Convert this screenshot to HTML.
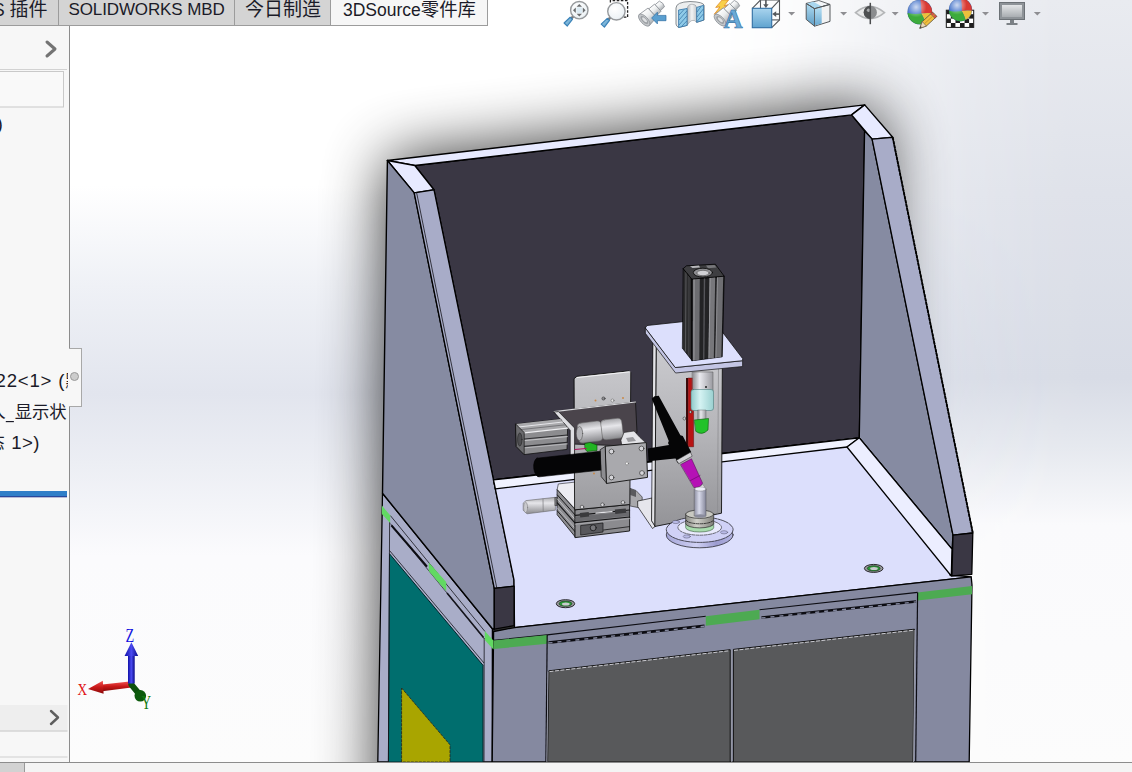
<!DOCTYPE html>
<html><head><meta charset="utf-8">
<style>
html,body{margin:0;padding:0;}
body{width:1132px;height:772px;overflow:hidden;position:relative;background:#fff;font-family:"Liberation Sans","Noto Sans CJK SC",sans-serif;color:#1b1b28;}
#vp{position:absolute;left:0;top:0;width:1132px;height:772px;}
.tab{position:absolute;top:-1px;height:25px;background:#d4d4d4;border:1px solid #9c9c9c;box-sizing:content-box;font-size:19px;line-height:21px;white-space:nowrap;overflow:hidden;}
.tab > span{position:absolute;top:-1.3px;}
#left{position:absolute;left:0;top:26px;width:69px;height:736px;background:#f7f7f7;border-right:1px solid #8c8c8c;overflow:hidden;}
#left .t{position:absolute;font-size:19px;white-space:nowrap;line-height:24px;}
#handle{position:absolute;left:69px;top:348px;width:12px;height:57px;background:#f7f7f7;border:1px solid #a8a8a8;border-left:none;}
#bottom{position:absolute;left:0;top:762px;width:1132px;height:10px;background:#f4f4f4;border-top:1px solid #8c8c8c;}
</style></head><body>
<svg id="vp" width="1132" height="772" viewBox="0 0 1132 772">
<defs>
<linearGradient id="bg" x1="0" y1="0" x2="0" y2="772" gradientUnits="userSpaceOnUse">
<stop offset="0" stop-color="#ffffff"/><stop offset="0.24" stop-color="#ffffff"/><stop offset="0.37" stop-color="#eff1f6"/><stop offset="0.51" stop-color="#e2e5ee"/><stop offset="0.6" stop-color="#ecEEf4"/><stop offset="0.72" stop-color="#fbfbfd"/><stop offset="1" stop-color="#fcfcfc"/>
</linearGradient>
<linearGradient id="bg2" x1="0" y1="0" x2="0" y2="772" gradientUnits="userSpaceOnUse">
<stop offset="0" stop-color="#e9ebf0"/><stop offset="0.25" stop-color="#dfe2ea"/><stop offset="0.49" stop-color="#d8dce6"/><stop offset="0.58" stop-color="#e6e9ef"/><stop offset="0.68" stop-color="#fafafc"/><stop offset="1" stop-color="#fcfcfc"/>
</linearGradient>
<linearGradient id="bgm" x1="720" y1="0" x2="1132" y2="0" gradientUnits="userSpaceOnUse"><stop offset="0" stop-color="#000"/><stop offset="0.15" stop-color="#202020"/><stop offset="0.4" stop-color="#909090"/><stop offset="0.6" stop-color="#d8d8d8"/><stop offset="0.8" stop-color="#fafafa"/><stop offset="1" stop-color="#fff"/></linearGradient>
<mask id="bgmask" maskUnits="userSpaceOnUse" x="0" y="0" width="1132" height="772"><rect x="0" y="0" width="1132" height="772" fill="url(#bgm)"/></mask>
<filter id="blur" x="-30%" y="-30%" width="160%" height="160%"><feGaussianBlur stdDeviation="31"/></filter>
</defs>
<rect x="0" y="0" width="1132" height="772" fill="url(#bg)"/>
<rect x="0" y="0" width="1132" height="772" fill="url(#bg2)" mask="url(#bgmask)"/>
<!--SHADOW-->
<g filter="url(#blur)" opacity="0.8">
<polygon points="387,160 865,105 886,132 886,900 377,900 382,495" fill="#000"/>
</g>

<!--/SHADOW-->
<!--MODEL-->
<g id="model" stroke-linejoin="round">
<!-- dark back wall -->
<polygon points="414.8,165.5 851.6,114.9 864.6,131 859.3,437.8 493.5,479.9 434,189.8" fill="#3a3744" stroke="#000" stroke-width="1.3"/>
<!-- top face -->
<polygon points="387.4,160.5 864.7,104.9 851.6,114.9 414.8,165.5" fill="#e7eaff" stroke="#000" stroke-width="1.4"/>
<!-- left chamfer face -->
<polygon points="387.4,160.5 414.8,165.5 434,189.8 414.2,192.9" fill="#e7eaff" stroke="#000" stroke-width="1.4"/>
<!-- right chamfer face -->
<polygon points="864.7,104.9 892.7,137.3 872.1,139.1 851.6,114.9" fill="#e7eaff" stroke="#000" stroke-width="1.4"/>
<!-- left cabinet side (lighter) -->
<polygon points="382.5,493.3 492.4,628.8 492.2,762 377.8,762" fill="#a9adc8" stroke="#000" stroke-width="1.3"/>
<!-- left grey side panel -->
<polygon points="387.4,160.5 414.2,192.9 494.3,588.3 494.3,629.2 492.4,628.8 382.5,493.3" fill="#868ba2" stroke="#000" stroke-width="1.4"/>
<!-- left slanted light face -->
<polygon points="414.2,192.9 434,189.8 514,580 514.1,586.2 494.3,588.3" fill="#a8acc8" stroke="#000" stroke-width="1.3"/>
<line x1="416.6" y1="192.6" x2="496.8" y2="588" stroke="#15151c" stroke-width="0.8"/>
<!-- right inner grey side face -->
<polygon points="864.6,131 872.1,139.1 953,535.2 952,549.2 859.3,437.8" fill="#868ba2" stroke="#000" stroke-width="1.3"/>
<!-- right slanted light face -->
<polygon points="872.1,139.1 892.7,137.3 972.8,533 953,535.2" fill="#a8acc8" stroke="#000" stroke-width="1.3"/>
<line x1="892.7" y1="137.3" x2="972.8" y2="533" stroke="#000" stroke-width="1.8" stroke-dasharray="3.2 0.8"/>
<!-- table -->
<polygon points="493.5,479.9 859.3,437.8 951.2,548.3 950,575 971.2,576.8 514.5,627.6 514,580" fill="#dcdffc" stroke="#000" stroke-width="1.3"/>
<!-- back white strip -->
<polygon points="493.5,479.9 859.3,437.8 847,447 495.4,488.8" fill="#f0f2ff" stroke="#000" stroke-width="1.3"/>
<!-- right white strip -->
<polygon points="859.3,437.8 952,549.2 951.3,576 847,447" fill="#eceeff" stroke="#000" stroke-width="1.3"/>
<!-- end caps -->
<polygon points="953,535.2 972.8,533 971.8,574.3 951.9,576" fill="#3a3744" stroke="#000" stroke-width="1.3"/>
<polygon points="494.3,588.3 514.1,586.2 514.1,625.7 494.3,629.2" fill="#3a3744" stroke="#000" stroke-width="1.3"/>
<!-- cabinet front -->
<polygon points="493.6,631.5 514.5,627.6 971.2,576.8 972,585 969.2,762 492.2,762" fill="#8589a0" stroke="#000" stroke-width="1.3"/>
<!-- front trim lines -->
<polyline points="493.6,640.4 547.2,634.9 705.8,616.3" fill="none" stroke="#0c0c12" stroke-width="1.1"/>
<polyline points="759.5,609.8 917.6,592.4" fill="none" stroke="#0c0c12" stroke-width="1.1"/>
<!-- slot dashed lines -->
<line x1="548.5" y1="642.6" x2="704.5" y2="625.9" stroke="#0c0c12" stroke-width="2.6"/>
<line x1="548.5" y1="643" x2="704.5" y2="626.3" stroke="#8589a0" stroke-width="1.4" stroke-dasharray="4 5"/>
<line x1="761.5" y1="617.6" x2="916" y2="601.5" stroke="#0c0c12" stroke-width="2.6"/>
<line x1="761.5" y1="618" x2="916" y2="601.9" stroke="#8589a0" stroke-width="1.4" stroke-dasharray="4 5"/>
<!-- green strips front -->
<polygon points="493.6,640.4 547.2,634.9 547.2,643.8 493.6,649" fill="#4daa52"/>
<polygon points="705.8,616.3 759.5,609.8 759.5,619.3 705.8,625.7" fill="#4daa52"/>
<polygon points="917.6,592.4 972,586 972,594.3 917.6,600.6" fill="#4daa52"/>
<!-- columns edges -->
<line x1="547.2" y1="634.9" x2="545.9" y2="762" stroke="#0c0c12" stroke-width="1.2"/>
<line x1="917.6" y1="592.4" x2="915.7" y2="762" stroke="#0c0c12" stroke-width="1.2"/>
<!-- doors -->
<polygon points="548.8,670.8 730.2,649.7 730.2,762 547.6,762" fill="#58595b" stroke="#111" stroke-width="1"/>
<polygon points="733.4,649.4 914.4,629.2 913,762 733.4,762" fill="#58595b" stroke="#111" stroke-width="1"/>
<line x1="549.5" y1="671.6" x2="729" y2="650.8" stroke="#c9c9cf" stroke-width="1" stroke-dasharray="4 1.5"/>
<line x1="734" y1="650.4" x2="914" y2="630.2" stroke="#c9c9cf" stroke-width="1" stroke-dasharray="4 1.5"/>
<line x1="731.8" y1="649.6" x2="731.8" y2="762" stroke="#9a9ca6" stroke-width="1"/>
<line x1="914.9" y1="630" x2="913.6" y2="762" stroke="#a4a6b0" stroke-width="0.9"/>
<line x1="548" y1="671.5" x2="546.9" y2="762" stroke="#a4a6b0" stroke-width="0.8"/>
<!-- left side details -->
<polygon points="389.5,553.8 483,665.3 483,762 388.4,762" fill="#006e6e" stroke="#02242a" stroke-width="1"/>
<polygon points="401.6,688 450,744.8 450,762 401.6,762" fill="#a9a500" stroke="#222" stroke-width="0.8" stroke-dasharray="3 1"/>
<line x1="390.3" y1="515.5" x2="485" y2="631.5" stroke="#15151c" stroke-width="0.8"/>
<line x1="390.3" y1="523.5" x2="484.5" y2="639" stroke="#15151c" stroke-width="0.7"/>
<line x1="391.4" y1="525.4" x2="427" y2="566.6" stroke="#0c0c12" stroke-width="2.2"/>
<line x1="447" y1="593" x2="483.5" y2="637.5" stroke="#15151c" stroke-width="1.6"/>
<line x1="389.5" y1="550.5" x2="484" y2="663" stroke="#15151c" stroke-width="0.8"/>
<line x1="389.6" y1="522" x2="388.4" y2="762" stroke="#15151c" stroke-width="0.8"/>
<line x1="484.2" y1="638" x2="484" y2="762" stroke="#15151c" stroke-width="0.8"/>
<!-- green side bits -->
<polygon points="381.9,505.6 390.1,515.3 390.1,523.1 381.9,514" fill="#62d962"/>
<polygon points="428.8,562.5 446.2,582 446.2,591.3 428.8,571.1" fill="#62d962"/>
<polygon points="484.8,631 493.3,640.4 493.4,649.5 484.8,640" fill="#62d962"/>
<!-- washers -->
<g id="w1"><ellipse cx="565.5" cy="603.7" rx="9.2" ry="4" fill="#9a9a9e" stroke="#2a2a2e" stroke-width="1"/><ellipse cx="565.5" cy="603.7" rx="6.4" ry="2.6" fill="#2a9a36" stroke="#1e3a22" stroke-width="0.7"/><ellipse cx="565.8" cy="603.9" rx="3.8" ry="1.5" fill="#c9c9cd"/></g>
<g id="w2"><ellipse cx="873.7" cy="568.4" rx="9.3" ry="4" fill="#9a9a9e" stroke="#2a2a2e" stroke-width="1"/><ellipse cx="873.7" cy="568.4" rx="6.4" ry="2.6" fill="#2a9a36" stroke="#1e3a22" stroke-width="0.7"/><ellipse cx="874" cy="568.6" rx="3.8" ry="1.5" fill="#c9c9cd"/></g>
</g>

<!--/MODEL-->
<!--EQUIP-->
<defs>
<linearGradient id="cyl" x1="0" y1="0" x2="1" y2="0"><stop offset="0" stop-color="#8e8e92"/><stop offset="0.35" stop-color="#e9e9ee"/><stop offset="1" stop-color="#9a9aa0"/></linearGradient>
<linearGradient id="cylv" x1="0" y1="0" x2="0" y2="1"><stop offset="0" stop-color="#a8a8ac"/><stop offset="0.35" stop-color="#e6e6ea"/><stop offset="1" stop-color="#8a8a8e"/></linearGradient>
<linearGradient id="cyan" x1="0" y1="0" x2="1" y2="0"><stop offset="0" stop-color="#8fc9c9"/><stop offset="0.4" stop-color="#d5f3f3"/><stop offset="1" stop-color="#9ad0d0"/></linearGradient>
<linearGradient id="colg" x1="0" y1="0" x2="1" y2="0"><stop offset="0" stop-color="#b4b4b8"/><stop offset="0.5" stop-color="#c6c6ca"/><stop offset="1" stop-color="#b0b0b4"/></linearGradient>
<linearGradient id="flside" x1="0" y1="0" x2="1" y2="0"><stop offset="0" stop-color="#a5a6d8"/><stop offset="0.45" stop-color="#d0d1f4"/><stop offset="0.75" stop-color="#9c9cd0"/><stop offset="1" stop-color="#b4b5e2"/></linearGradient>
<linearGradient id="hubside" x1="0" y1="0" x2="1" y2="0"><stop offset="0" stop-color="#8a8a84"/><stop offset="0.4" stop-color="#d0d0ca"/><stop offset="1" stop-color="#80807a"/></linearGradient>
<linearGradient id="pinl" x1="0" y1="0" x2="1" y2="0"><stop offset="0" stop-color="#9092a6"/><stop offset="0.4" stop-color="#d8daea"/><stop offset="1" stop-color="#85879a"/></linearGradient>
<linearGradient id="colv" x1="0" y1="345" x2="0" y2="525" gradientUnits="userSpaceOnUse"><stop offset="0" stop-color="#cbcbcf"/><stop offset="0.5" stop-color="#b4b4b8"/><stop offset="1" stop-color="#949498"/></linearGradient>
<linearGradient id="platev" x1="0" y1="372" x2="0" y2="508" gradientUnits="userSpaceOnUse"><stop offset="0" stop-color="#c6c6ca"/><stop offset="0.5" stop-color="#b4b4b8"/><stop offset="1" stop-color="#9c9ca0"/></linearGradient>
</defs>
<g id="equip" stroke-linejoin="round" stroke-linecap="round">
<!-- ===== XY stage assembly (left) ===== -->
<!-- micrometer knob -->
<polygon points="523.5,502.8 526,500.6 555.4,497.3 555.4,510.2 527,513.8 523.5,510.5" fill="url(#cylv)" stroke="#66666a" stroke-width="0.6"/>
<line x1="543" y1="498.8" x2="543.2" y2="511.6" stroke="#7a7a7e" stroke-width="0.7"/>
<ellipse cx="525.6" cy="507.4" rx="2" ry="5.2" fill="#c9c9cd" stroke="#77777b" stroke-width="0.5"/>
<rect x="555.2" y="497.5" width="3.6" height="8" fill="#77777b" stroke="#222" stroke-width="0.5"/>
<!-- stage base stack -->
<polygon points="558.7,483.9 576,482 576,510 557.4,490" fill="#ececf2" stroke="#222" stroke-width="0.6"/>
<polygon points="557.4,489.9 575.3,509.8 575.3,537 557.4,515" fill="#8e8e92" stroke="#111" stroke-width="0.8"/>
<line x1="557.4" y1="495" x2="575.3" y2="515.2" stroke="#1a1a1c" stroke-width="1"/>
<line x1="557.4" y1="499" x2="575.3" y2="519.5" stroke="#d0d0d4" stroke-width="0.8"/>
<line x1="557.4" y1="503" x2="575.3" y2="523.4" stroke="#1a1a1c" stroke-width="1.2"/>
<line x1="557.4" y1="508" x2="575.3" y2="528.5" stroke="#c4c4c8" stroke-width="0.7"/>
<line x1="557.4" y1="511" x2="575.3" y2="532" stroke="#1a1a1c" stroke-width="1"/>
<polygon points="575.3,509.8 629.6,504.5 629.6,531 575.3,537.6" fill="#8b8b8f" stroke="#111" stroke-width="0.9"/>
<line x1="575.3" y1="515.4" x2="629.6" y2="510" stroke="#151517" stroke-width="1.1"/>
<polygon points="576,516.6 629,511.2 629,516 576,521.6" fill="#6a6a6e"/>
<line x1="575.3" y1="522.6" x2="629.6" y2="517" stroke="#151517" stroke-width="1.2"/>
<line x1="575.3" y1="524.2" x2="629.6" y2="518.6" stroke="#b5b5b9" stroke-width="0.7"/>
<line x1="596" y1="513.2" x2="612" y2="511.6" stroke="#e4e4e8" stroke-width="1.3"/>
<polygon points="581,525.5 603,523 603,532 581,535" fill="#58585c" stroke="#151517" stroke-width="0.7"/>
<circle cx="593.2" cy="527.8" r="3" fill="#77777b" stroke="#151517" stroke-width="0.8"/>
<polyline points="603.5,530 629.6,526.6" fill="none" stroke="#151517" stroke-width="0.8"/>
<rect x="580" y="512.5" width="9" height="4.5" fill="#3a3a3d" transform="rotate(-6 584 515)"/>
<rect x="615" y="509" width="11" height="4.5" fill="#3a3a3d" transform="rotate(-6 620 511)"/>
<!-- right foot bracket of stage -->
<polygon points="630.3,488.5 636,490.5 642.2,497 642.2,508.4 630.3,506" fill="#a8a8ac" stroke="#222" stroke-width="0.6"/>
<polygon points="630.3,488.5 636,490.5 636,497 630.3,495" fill="#5a5a5e"/>
<!-- vertical plate -->
<polygon points="574.3,378.5 577,376.3 629,370.8 630.8,372.6 629.8,504.5 575,509.8" fill="url(#platev)" stroke="#111" stroke-width="0.9"/>
<polyline points="577,377.6 629.8,371.8" fill="none" stroke="#f4f4f6" stroke-width="1"/>
<circle cx="595.5" cy="400.5" r="1" fill="#c98a4a"/><circle cx="603.5" cy="398.5" r="1.6" fill="#8c8c90" stroke="#222" stroke-width="0.5"/><circle cx="612.5" cy="400.5" r="1.5" fill="#e8e8e8" stroke="#444" stroke-width="0.4"/><circle cx="623" cy="398" r="1" fill="#c98a4a"/>
<circle cx="582" cy="507" r="1.8" fill="#d8d8dc" stroke="#222" stroke-width="0.5"/><circle cx="602.5" cy="504.7" r="1.8" fill="#d8d8dc" stroke="#222" stroke-width="0.5"/><circle cx="623" cy="502.4" r="1.8" fill="#d8d8dc" stroke="#222" stroke-width="0.5"/>
<!-- dark horizontal plate -->
<polygon points="554.2,411.6 635.5,402 637,432 628,446 572,444 572,431 558,415" fill="#4a444b" stroke="#111" stroke-width="0.8"/>
<polyline points="554.2,411.6 635.5,402" fill="none" stroke="#d9d9dd" stroke-width="1.1"/>
<!-- L bracket -->
<polygon points="554.2,412 558.5,411.6 574.6,428 574.6,456 570.2,456 570.2,430.5" fill="#dedee2" stroke="#111" stroke-width="0.7"/>
<!-- air cylinder left -->
<polygon points="515.8,424.1 560.5,419 567.6,428 567,449.4 524.2,454.6 516.5,446.8" fill="#8c8c8f" stroke="#111" stroke-width="0.8"/>
<polygon points="515.8,424.1 560.5,419 567.6,428 524.2,432.6" fill="#a9a9ac"/>
<line x1="518.5" y1="427" x2="563" y2="422" stroke="#e6e6ea" stroke-width="1"/>
<line x1="521" y1="429.6" x2="565.5" y2="424.8" stroke="#6a6a6d" stroke-width="0.8"/>
<line x1="524.2" y1="432.8" x2="567.6" y2="428.2" stroke="#efeff2" stroke-width="1.2"/>
<line x1="524.2" y1="439" x2="567.3" y2="435" stroke="#2e2e31" stroke-width="1.2"/>
<line x1="524.2" y1="440.6" x2="567.3" y2="436.6" stroke="#c9c9cd" stroke-width="0.9"/>
<line x1="524.2" y1="446.3" x2="567.2" y2="442.3" stroke="#2e2e31" stroke-width="1.2"/>
<line x1="524.2" y1="447.9" x2="567.2" y2="443.9" stroke="#bcbcc0" stroke-width="0.9"/>
<polygon points="515.8,424.1 524.2,432.6 524.2,454.6 516.5,446.8" fill="#6a6a6d" stroke="#111" stroke-width="0.7"/>
<ellipse cx="519.8" cy="439.5" rx="2.2" ry="6.5" fill="#4e4e51" stroke="#222" stroke-width="0.6"/>
<!-- rollers -->
<rect x="578" y="422" width="24" height="20" rx="4" fill="url(#cylv)" stroke="#666" stroke-width="0.5" transform="rotate(-7 590 432)"/>
<rect x="601.5" y="419" width="21" height="20" rx="4" fill="url(#cylv)" stroke="#666" stroke-width="0.5" transform="rotate(-7 612 429)"/>
<ellipse cx="579.5" cy="433.5" rx="3.2" ry="7" fill="#b4b4b8" stroke="#444" stroke-width="0.5"/>
<!-- white bracket behind block -->
<polygon points="621,440 624,432.5 634,431 640,437.5 646,443 622,445" fill="#e4e4e8" stroke="#222" stroke-width="0.6"/><polygon points="626,438 633,437 636,441 628,442" fill="#9a9a9e"/>
<!-- small green -->
<polygon points="585,443.5 590,442.5 597,445 597,450.5 587,451.5 585,449" fill="#22b422" stroke="#0a4a0a" stroke-width="0.6"/>
<line x1="575" y1="449.5" x2="586" y2="448.5" stroke="#b01060" stroke-width="1.2"/>
<!-- black rod -->
<path d="M537,458.2 L606.5,450.5 L606.5,469.5 L539.5,476.8 A4.5,9.3 -5 0 1 537,458.2 Z" fill="#050506" stroke="#000" stroke-width="0.6"/>
<!-- square block -->
<polygon points="600.5,449.5 605.6,446.2 606.8,483.4 601.5,477" fill="#8d8d91" stroke="#111" stroke-width="0.7"/>
<polygon points="605.6,446.2 646.3,442.6 647.5,477.4 606.8,483.4" fill="#a9a9ad" stroke="#111" stroke-width="0.9"/>
<circle cx="611.5" cy="451.5" r="2.4" fill="#d5d5d9" stroke="#222" stroke-width="0.6"/><circle cx="641.5" cy="448.5" r="2.4" fill="#d5d5d9" stroke="#222" stroke-width="0.6"/>
<circle cx="611.5" cy="477.5" r="2.4" fill="#d5d5d9" stroke="#222" stroke-width="0.6"/><circle cx="642" cy="473" r="2.4" fill="#d5d5d9" stroke="#222" stroke-width="0.6"/>
<circle cx="627" cy="463.5" r="1.4" fill="#fff" stroke="#444" stroke-width="0.4"/>
<circle cx="594" cy="473.5" r="1" fill="#c98a4a"/>
<!-- ===== column assembly (right) ===== -->
<!-- foot plate of column -->
<polygon points="638,501 652,498 651.8,521 655.2,526.4 652.5,528.5 638,507" fill="#e6e6ec" stroke="#111" stroke-width="0.7"/>
<!-- column -->
<polygon points="653.1,340 656.6,346 655.2,526.4 651.8,521" fill="#e4e4e8" stroke="#111" stroke-width="0.7"/>
<polygon points="656.6,346 722.5,338 721.5,513.2 655.2,526.4" fill="url(#colv)" stroke="#111" stroke-width="0.9"/>
<line x1="718.5" y1="366" x2="717.5" y2="513" stroke="#8e8e92" stroke-width="0.8"/>
<!-- black handle horizontal -->
<polygon points="647.8,448.4 672,444.5 680,458 648.5,461.2" fill="#050506"/>
<!-- red bar -->
<rect x="686" y="378" width="2.4" height="68.8" fill="#3a0c0c"/><rect x="688.2" y="378" width="5.4" height="68.8" fill="#b81414" stroke="#400" stroke-width="0.4"/>
<!-- shaft -->
<rect x="692.5" y="372" width="20.5" height="20" fill="url(#cyl)" stroke="#555" stroke-width="0.5"/>
<circle cx="706" cy="387" r="1" fill="#222"/>
<rect x="691" y="389.5" width="22.5" height="21" rx="2.5" fill="url(#cyan)" stroke="#4d7d7d" stroke-width="0.6"/>
<rect x="698" y="410" width="8" height="10" fill="url(#cyl)" stroke="#555" stroke-width="0.4"/>
<path d="M694.5,420 L708.5,418.5 L708,430 Q702,436 696,431.5 Z" fill="#22c22a" stroke="#0a5a0a" stroke-width="0.6"/>
<circle cx="684.5" cy="418.5" r="1.5" fill="#ccc" stroke="#222" stroke-width="0.5"/><circle cx="690.5" cy="412" r="1.2" fill="#ccc" stroke="#222" stroke-width="0.5"/>
<!-- torch black -->
<polygon points="651.7,398.8 654.5,396.3 658.7,395.8 680.4,435.2 682.8,436 691.2,452 689.5,457 678,463.2 668,443 668.8,441" fill="#050506"/>
<polygon points="676.5,460.3 690.5,452.3 692.2,456.2 679,463.6" fill="#d4d4d8" stroke="#222" stroke-width="0.5"/>
<!-- magenta -->
<polygon points="680.8,464.5 691.5,458.8 702.6,483.2 699.5,487 694.2,487.5" fill="#b512b5" stroke="#4a064a" stroke-width="0.5"/>
<line x1="690.5" y1="480.5" x2="700" y2="475.5" stroke="#6d0a6d" stroke-width="0.7"/>
<polygon points="697,488.5 703,484.5 705,488 699,491" fill="#e8e8ec" stroke="#555" stroke-width="0.4"/>
<!-- base flange -->
<ellipse cx="699.7" cy="534.9" rx="33.4" ry="12.9" fill="url(#flside)" stroke="#2a2a30" stroke-width="0.8"/>
<ellipse cx="699.7" cy="529.7" rx="33.4" ry="12.7" fill="#d0d1f6" stroke="#2a2a30" stroke-width="0.8" stroke-dasharray="5 1"/>
<ellipse cx="699.7" cy="527.4" rx="21.8" ry="7.8" fill="#e9eafd" stroke="#33333a" stroke-width="0.7" stroke-dasharray="3 1.2"/>
<ellipse cx="675.9" cy="522" rx="3.6" ry="1.6" fill="#b9bae6" stroke="#55556a" stroke-width="0.5"/><ellipse cx="724.1" cy="532.3" rx="3.6" ry="1.6" fill="#b9bae6" stroke="#55556a" stroke-width="0.5"/><ellipse cx="686.8" cy="536.5" rx="3.6" ry="1.6" fill="#b9bae6" stroke="#55556a" stroke-width="0.5"/>
<path d="M685.7,523.5 L685.7,527.6 A14,4.4 0 0 0 713.7,527.6 L713.7,523.5 Z" fill="#a9dcae" stroke="#3a5a3e" stroke-width="0.6"/>
<path d="M685.7,514.2 L685.7,523.5 A14,4.4 0 0 0 713.7,523.5 L713.7,514.2 Z" fill="url(#hubside)" stroke="#2a2a2a" stroke-width="0.7"/>
<path d="M686,520.3 A14,4.4 0 0 0 713.4,520.3" fill="none" stroke="#222" stroke-width="0.8" stroke-dasharray="2.5 1.2"/>
<ellipse cx="699.7" cy="514.2" rx="14" ry="4.2" fill="#c9c9c2" stroke="#2a2a2a" stroke-width="0.7"/>
<!-- pin -->
<rect x="694.6" y="489" width="11.4" height="27" fill="url(#pinl)" stroke="#50505a" stroke-width="0.5"/>
<ellipse cx="700.3" cy="516" rx="5.7" ry="1.8" fill="#8a8c9c"/>
<ellipse cx="700.3" cy="489" rx="5.7" ry="2.1" fill="#eceef8" stroke="#666" stroke-width="0.4"/>
<!-- plate -->
<polygon points="645.5,333.5 675.6,373 742.6,366.5 742.6,360.7 675.6,367.5 645.5,327.7" fill="#c3c5e4" stroke="#111" stroke-width="0.7"/>
<polygon points="645.5,327.7 647,325.5 712.1,318.5 742.6,358.5 742.6,360.7 675.6,367.5" fill="#dcdffc" stroke="#111" stroke-width="0.8"/>
<!-- ribbed cylinder -->
<polygon points="683.4,268.4 692.1,279.1 692.1,360.7 682.6,348.5" fill="#2b2b2d" stroke="#000" stroke-width="0.7"/>
<line x1="686" y1="272.5" x2="685.5" y2="351" stroke="#5a5a5d" stroke-width="1"/>
<line x1="689" y1="276" x2="688.8" y2="355" stroke="#4a4a4d" stroke-width="0.9"/>
<polygon points="692.1,279.1 724.2,276.2 722.2,356.8 692.1,360.7" fill="#232325" stroke="#000" stroke-width="0.8"/>
<polygon points="693.4,279.0 699.8,278.4 699.3,359.8 693.3,360.5" fill="#6d6d71"/><polygon points="693.4,279.0 694.6,278.9 694.4,360.4 693.3,360.5" fill="#9c9ca0"/><polygon points="703.8,278.0 705.2,277.9 704.4,359.1 703.1,359.3" fill="#55555a"/><polygon points="709.6,277.5 715.2,277.0 713.8,357.9 708.5,358.6" fill="#77777b"/><polygon points="709.6,277.5 710.6,277.4 709.4,358.5 708.5,358.6" fill="#9a9a9e"/><polygon points="717.0,276.9 723.2,276.3 721.3,356.9 715.4,357.7" fill="#6e6e72"/><polygon points="717.0,276.9 718.0,276.8 716.4,357.6 715.4,357.7" fill="#8e8e92"/>
<polygon points="683.4,268.4 686.5,265.8 715.4,264.2 724.2,276.2 692.1,279.1" fill="#3e3e41" stroke="#000" stroke-width="0.8"/>
<polygon points="690,266.3 699,265.6 700,267.4 692.5,268" fill="#b9b9bd"/>
<polygon points="706,265.6 714.5,265 716.5,267.6 708,268.2" fill="#77777b"/>
<ellipse cx="702.9" cy="272.6" rx="9.6" ry="4.4" fill="#8f8f93" stroke="#0c0c0c" stroke-width="0.9"/>
<ellipse cx="703" cy="273" rx="6.2" ry="2.7" fill="#d0d0d4" stroke="#333" stroke-width="0.5"/>
</g>

<!--/EQUIP-->
<!--ICONS-->
<defs>
<radialGradient id="lens" cx="0.4" cy="0.35" r="0.8"><stop offset="0" stop-color="#ffffff"/><stop offset="0.7" stop-color="#eef3f6"/><stop offset="1" stop-color="#d4dde3"/></radialGradient>
<linearGradient id="hand" x1="0" y1="0" x2="1" y2="1"><stop offset="0" stop-color="#8cc0e6"/><stop offset="1" stop-color="#3f86bf"/></linearGradient>
<linearGradient id="cubeb" x1="0" y1="0" x2="0" y2="1"><stop offset="0" stop-color="#a9d4ee"/><stop offset="1" stop-color="#5fa3cf"/></linearGradient>
<linearGradient id="mon" x1="0" y1="0" x2="0" y2="1"><stop offset="0" stop-color="#e4e6e8"/><stop offset="1" stop-color="#a9adb1"/></linearGradient>
<radialGradient id="ballhl" cx="0.35" cy="0.3" r="0.7"><stop offset="0" stop-color="#fff" stop-opacity="0.75"/><stop offset="0.6" stop-color="#fff" stop-opacity="0"/></radialGradient>
<g id="ball">
<circle r="12.3" fill="#3a6cc8"/>
<path d="M1.5,1.5 Q1.8,-6 0.5,-12.3 A12.3,12.3 0 0 1 12.25,1.2 Q6,0.6 1.5,1.5 Z" fill="#d93a34"/>
<path d="M1.5,1.5 Q6,0.6 12.25,1.2 A12.3,12.3 0 0 1 5.6,10.95 Q4.2,6 1.5,1.5 Z" fill="#ecc03c"/>
<path d="M1.5,1.5 Q4.2,6 5.6,10.95 A12.3,12.3 0 0 1 -12.26,1 Q-5,2.6 1.5,1.5 Z" fill="#3cab3c"/>
<circle r="12.3" fill="url(#ballhl)"/>
<circle r="12.3" fill="none" stroke="#000" stroke-opacity="0.12" stroke-width="0.8"/>
</g>
<g id="tele">
<polygon points="0,-7.5 11,-6.3 11,6.3 0,7.5" fill="url(#tgrad)" stroke="#8e9398" stroke-width="0.8"/>
<polygon points="11,-5.2 18.5,-4.8 18.5,4.8 11,5.2" fill="url(#tgrad)" stroke="#8e9398" stroke-width="0.8"/>
<path d="M18.5,-4 L24,-3.8 Q26,0 24,3.8 L18.5,4 Z" fill="url(#tgrad)" stroke="#8e9398" stroke-width="0.8"/>
<ellipse cx="0" cy="0" rx="3.6" ry="7.5" fill="#c4c7ca" stroke="#8e9398" stroke-width="0.8"/>
<ellipse cx="0.2" cy="0" rx="2.3" ry="5" fill="#9da1a5"/>
<ellipse cx="0.5" cy="0" rx="1.3" ry="3.2" fill="#dfe1e3"/>
</g>
<linearGradient id="tgrad" x1="0" y1="0" x2="0" y2="1"><stop offset="0" stop-color="#ffffff"/><stop offset="0.45" stop-color="#eceeef"/><stop offset="1" stop-color="#a9adb1"/></linearGradient>
<linearGradient id="grip" x1="0" y1="0" x2="1" y2="1"><stop offset="0" stop-color="#a9d2ea"/><stop offset="1" stop-color="#4f97c6"/></linearGradient>
<linearGradient id="cubel" x1="0" y1="0" x2="0" y2="1"><stop offset="0" stop-color="#b0dcf2"/><stop offset="1" stop-color="#5e9cc4"/></linearGradient><linearGradient id="cubel2" x1="0" y1="0" x2="0" y2="1"><stop offset="0" stop-color="#b8e0f4"/><stop offset="1" stop-color="#6aaad2"/></linearGradient>
<g id="dd"><polygon points="-3.5,-1.7 3.5,-1.7 0,2" fill="#8e8e92"/></g>
</defs>
<g id="icons">
<!-- zoom to fit -->
<g>
<line x1="574.0" y1="15.6" x2="570.6" y2="19.2" stroke="#77797c" stroke-width="2.6"/>
<polygon points="572.4,19.3 570.2,17.3 564.1,23.0 567.3,26.0" fill="url(#grip)" stroke="#3a82b8" stroke-width="1.2" stroke-linejoin="round"/>
<circle cx="579.3" cy="10.2" r="8.7" fill="url(#lens)" stroke="#96999c" stroke-width="1.4"/>
<rect x="576.4" y="7.3" width="5.8" height="5.8" fill="#dcebf4"/>
<g fill="#6a6c6e"><polygon points="579.3,4 576.6,6.8 582,6.8"/><polygon points="579.3,16.6 576.6,13.8 582,13.8"/><polygon points="573,10.2 575.8,7.5 575.8,12.9"/><polygon points="585.6,10.2 582.8,7.5 582.8,12.9"/></g>
</g>
<!-- zoom to area -->
<g>
<path d="M610.4,2.5 L610.4,0.6 L627.6,0.6 L627.6,17.2 L623,17.2" fill="none" stroke="#222" stroke-width="1.3" stroke-dasharray="2.6 1.5"/>
<line x1="611.1" y1="16.7" x2="607.7" y2="20.3" stroke="#77797c" stroke-width="2.6"/>
<polygon points="609.5,20.4 607.3,18.4 601.2,24.1 604.4,27.1" fill="url(#grip)" stroke="#3a82b8" stroke-width="1.2" stroke-linejoin="round"/>
<circle cx="616.4" cy="11.3" r="8.7" fill="url(#lens)" stroke="#96999c" stroke-width="1.4"/>
</g>
<!-- previous view -->
<g>
<use href="#tele" transform="translate(644.2,20.1) rotate(-42.4)"/>
<polygon points="651.6,18 657.4,12.2 657.4,15.4 666,15.4 666,20.7 657.4,20.7 657.4,23.9" fill="#5a9fd0" stroke="#2f6ea3" stroke-width="0.7"/>
</g>
<!-- section view -->
<g>
<path d="M676,8 Q676,2 690,1.5 Q704,2 704.1,5.5 L704.1,20 L696.7,22.3 L696.7,12 L687.1,12 L687.1,25.4 L678.6,27.5 Q676,26 676,24 Z" fill="#eceeef" stroke="#7c8186" stroke-width="0.9"/>
<path d="M687.1,8.5 Q688,4.2 692,4.2 Q696,4.2 696.7,7.4 L696.7,22.3 Q692,17 687.1,25.4 Z" fill="url(#bore)" stroke="#8e9398" stroke-width="0.6"/>
<polygon points="678.6,10 687.1,8.5 687.1,25.4 678.6,27.5" fill="#8fcbe8" stroke="#2f6ea3" stroke-width="0.8"/>
<polygon points="696.7,7.4 703.6,5.3 703.6,20.1 696.7,22.3" fill="#8fcbe8" stroke="#2f6ea3" stroke-width="0.8"/>
<g stroke="#2f6ea3" stroke-width="0.7"><line x1="679" y1="15" x2="684" y2="9.5"/><line x1="679" y1="20" x2="686.8" y2="11"/><line x1="679" y1="25" x2="686.8" y2="16"/><line x1="681.5" y1="26.5" x2="686.8" y2="21"/><line x1="697" y1="12" x2="701" y2="6.5"/><line x1="697" y1="17" x2="703.3" y2="9"/><line x1="697" y1="21.5" x2="703.3" y2="14"/></g>
</g>
<linearGradient id="bore" x1="0" y1="0" x2="1" y2="0"><stop offset="0" stop-color="#b4b8bc"/><stop offset="0.5" stop-color="#f2f3f4"/><stop offset="1" stop-color="#c4c7ca"/></linearGradient>
<!-- dynamic annotation views -->
<g>
<polygon points="722.1,0 728.5,0 724.2,5.8 727.9,4.8 714.2,14.3 720,6.9 715.7,7.4" fill="#f8d04a" stroke="#e08a2a" stroke-width="0.8"/>
<use href="#tele" transform="translate(720,20.1) rotate(-45)"/>
<text x="723.6" y="28.4" font-family="Liberation Serif,serif" font-size="26.5" font-weight="bold" fill="#6aaad6" stroke="#2f6ea3" stroke-width="0.6">A</text>
</g>
<!-- view orientation -->
<g>
<g fill="none" stroke="#55585b" stroke-width="1.1"><polyline points="752.3,8.3 760.5,0 779.5,0 779.5,19.9 771.7,27.7"/><line x1="771.7" y1="8.3" x2="779.5" y2="0"/><line x1="760.5" y1="0" x2="760.5" y2="8.3"/><line x1="771.7" y1="19.9" x2="779.5" y2="19.9"/></g>
<rect x="752.3" y="8.3" width="19.4" height="19.4" fill="url(#cubeb)" stroke="#2f6ea3" stroke-width="1.1"/>
<g stroke="#55585b" fill="#55585b"><line x1="765.9" y1="0" x2="765.9" y2="5" stroke-width="1.6"/><polygon points="763.2,4.2 768.6,4.2 765.9,8" stroke="none"/><line x1="779.5" y1="14.1" x2="775.5" y2="14.1" stroke-width="1.6"/><polygon points="776.2,11.3 776.2,16.9 772.2,14.1" stroke="none"/></g>
<use href="#dd" x="791.6" y="13.6"/>
</g>
<!-- display style -->
<g>
<polygon points="806.2,3.4 818.8,0.5 830,4.4 814.5,8.7" fill="#f4f6f8" stroke="#55585b" stroke-width="0.9"/>
<polygon points="806.2,3.4 813.5,1.7 822,6.6 814.5,8.7" fill="#a9d6ee"/>
<polygon points="806.2,3.4 814.5,8.7 814.5,26.2 806.2,19.4" fill="url(#cubel)" stroke="#55585b" stroke-width="1"/>
<polygon points="814.5,8.7 830,4.4 830,21.4 814.5,26.2" fill="#f1f2f3" stroke="#55585b" stroke-width="1"/>
<polygon points="814.9,9 821.7,7.1 821.7,23.6 814.9,25.6" fill="url(#cubel2)"/>
<polyline points="806.2,3.4 814.5,8.7 830,4.4" fill="none" stroke="#55585b" stroke-width="1"/>
<use href="#dd" x="843.6" y="13.6"/>
</g>
<!-- hide/show -->
<g>
<path d="M855.5,12.6 Q870,0 884.5,12.6 Q870,24.6 855.5,12.6 Z" fill="#e9eaeb" stroke="#b4b6b8" stroke-width="1.6"/>
<circle cx="870.3" cy="12.4" r="6.6" fill="#8a8c8e"/><path d="M870.3,5.8 A6.6,6.6 0 0 0 870.3,19 Z" fill="#4e5052"/>
<circle cx="868.6" cy="10.2" r="1.8" fill="#a9abad"/>
<line x1="870.3" y1="2.8" x2="870.3" y2="24.2" stroke="#4a4c4e" stroke-width="1.5"/>
<use href="#dd" x="895.2" y="13.6"/>
</g>
<!-- edit appearance -->
<g>
<use href="#ball" x="919.8" y="12"/>
<polygon points="919.8,28.3 922.3,21.6 932.6,12.2 936.8,16.4 926.4,26" fill="#f0c040" stroke="#5a5040" stroke-width="0.8" stroke-linejoin="round"/>
<polygon points="919.8,28.3 922.3,21.6 926.4,26" fill="#ead9b8" stroke="#5a5040" stroke-width="0.6"/>
<polygon points="919.8,28.3 920.7,25.9 921.7,27.3" fill="#333"/>
<polygon points="930.6,14 932.6,12.2 936.8,16.4 934.8,18.3" fill="#d9534a" stroke="#5a5040" stroke-width="0.5"/>
<line x1="924.4" y1="23.8" x2="934.7" y2="14.3" stroke="#c8982a" stroke-width="1"/>
</g>
<!-- apply scene -->
<g>
<rect x="946.3" y="10.2" width="27.4" height="17.2" fill="#1e1e1e"/>
<rect x="950.9" y="10.2" width="4.57" height="4.0" fill="#fff"/><rect x="960.0" y="10.2" width="4.57" height="4.0" fill="#fff"/><rect x="969.1" y="10.2" width="4.57" height="4.0" fill="#fff"/><rect x="946.3" y="14.2" width="4.57" height="4.4" fill="#fff"/><rect x="955.4" y="14.2" width="4.57" height="4.4" fill="#fff"/><rect x="964.6" y="14.2" width="4.57" height="4.4" fill="#fff"/><rect x="950.9" y="18.6" width="4.57" height="4.4" fill="#fff"/><rect x="960.0" y="18.6" width="4.57" height="4.4" fill="#fff"/><rect x="969.1" y="18.6" width="4.57" height="4.4" fill="#fff"/><rect x="946.3" y="23.0" width="4.57" height="4.4" fill="#fff"/><rect x="955.4" y="23.0" width="4.57" height="4.4" fill="#fff"/><rect x="964.6" y="23.0" width="4.57" height="4.4" fill="#fff"/>
<rect x="946.3" y="10.2" width="27.4" height="17.2" fill="none" stroke="#1e1e1e" stroke-width="1"/>
<use href="#ball" transform="translate(960.4,9.7) scale(0.935)"/>
<use href="#dd" x="985.5" y="13.6"/>
</g>
<!-- view settings -->
<g>
<rect x="999.5" y="2.5" width="25" height="17" fill="#8e9398" stroke="#6c7176" stroke-width="1"/>
<rect x="1002" y="5" width="20" height="12" fill="url(#mon)"/>
<rect x="1010" y="20" width="4" height="3" fill="#7c8186"/>
<rect x="1006.5" y="23" width="11" height="2" fill="#7c8186"/>
<use href="#dd" x="1037.3" y="13.6"/>
</g>
</g>

<!--/ICONS-->
<!--TRIAD-->
<defs>
<linearGradient id="zg" x1="0" y1="0" x2="1" y2="0"><stop offset="0" stop-color="#1010a8"/><stop offset="0.5" stop-color="#4a4af0"/><stop offset="1" stop-color="#0a0a8a"/></linearGradient>
<linearGradient id="xg" x1="0" y1="0" x2="0" y2="1"><stop offset="0" stop-color="#f05050"/><stop offset="0.5" stop-color="#c81818"/><stop offset="1" stop-color="#8a0a0a"/></linearGradient>
</defs>
<g id="triad">
<polygon points="102.4,684.6 129.5,681.5 131.5,687.5 102.4,691.3" fill="url(#xg)"/>
<polygon points="88,689 102.8,680.8 103.6,693.8" fill="url(#xg)"/>
<line x1="131.4" y1="684.6" x2="140" y2="695" stroke="#0c500c" stroke-width="6" stroke-linecap="round"/>
<circle cx="140.3" cy="695.8" r="5.8" fill="#0c5a0c"/>
<rect x="128" y="655" width="6.7" height="28.5" fill="url(#zg)"/>
<polygon points="131.4,642.3 138.2,655.9 124.6,655.9" fill="url(#zg)"/>
<text transform="translate(125.6,641.6) scale(0.84,1.06)" font-family="Liberation Serif,serif" font-size="17" fill="#1414e0">Z</text>
<text transform="translate(77.6,694.8) scale(0.78,1.04)" font-family="Liberation Serif,serif" font-size="17" fill="#e01414">X</text>
<text transform="translate(141.6,709.2) scale(0.78,1.06)" font-family="Liberation Serif,serif" font-size="17" fill="#0c7a0c">Y</text>
</g>

<!--/TRIAD-->
</svg>
<!-- tabs -->
<div class="tab" style="left:-1px;width:58px;"><span style="left:-7px;"><span style="font-size:17.5px">S </span>插件</span></div>
<div class="tab" style="left:58px;width:175px;"><span style="left:9.5px;font-size:17px;top:-0.6px;letter-spacing:-0.12px">SOLIDWORKS MBD</span></div>
<div class="tab" style="left:234px;width:95px;"><span style="left:10px;">今日制造</span></div>
<div class="tab" style="left:330px;width:156px;background:#f6f6f6;"><span style="left:12px;"><span style="font-size:17.5px">3DSource</span><span style="font-size:18.4px">零件库</span></span></div>
<div id="left">
<svg style="position:absolute;left:0;top:0" width="69" height="736" viewBox="0 26 69 736">
<polyline points="47,42 55,49 47,56" fill="none" stroke="#747474" stroke-width="3" stroke-linecap="round" stroke-linejoin="round"/>
<rect x="0" y="69" width="67" height="1" fill="#d2d2d2"/>
<rect x="-2" y="71.5" width="65.5" height="35.5" fill="#f9f9f9" stroke="#c9c9c9" stroke-width="1"/>
<rect x="0" y="491" width="67" height="6" fill="#2f7ec8"/>
<rect x="0" y="496.3" width="67" height="1" fill="#26338a"/>
<rect x="0" y="705" width="67.5" height="25.5" fill="#eeeeee"/>
<rect x="0" y="730.5" width="67.5" height="1" fill="#c4c4c4"/>
<rect x="0" y="756.5" width="67.5" height="1" fill="#cfcfcf"/>
<polyline points="51,711 58,717.5 51,724" fill="none" stroke="#5e5e5e" stroke-width="2.4" stroke-linecap="round" stroke-linejoin="round"/>
</svg>
<span class="t" style="left:-3.5px;top:86px;font-size:19px;">)</span>
<span class="t" style="left:-4.5px;top:343px;font-size:18.6px;letter-spacing:0.8px;width:72px;overflow:hidden;">22&lt;1&gt; (<span style="font-size:17.3px;letter-spacing:0">默</span></span>
<span class="t" style="left:-11.5px;top:374px;font-size:17.3px;width:78px;overflow:hidden;">人<span style="font-size:18.6px;display:inline-block;transform:scaleX(0.75);transform-origin:left;">_</span><span style="margin-left:-1.5px">显示状</span></span>
<span class="t" style="left:-12.5px;top:405px;font-size:17.3px;">态<span style="font-size:18.6px;letter-spacing:0.4px;margin-left:1px"> 1&gt;)</span></span>
</div>
<div id="handle"><div style="position:absolute;left:1.2px;top:23px;width:7px;height:7px;border-radius:50%;background:#cdcdcd;border:1px solid #9a9a9a"></div></div>
<div id="bottom"><div style="position:absolute;left:0;top:0;width:24px;height:10px;background:#d2d2d2;border-right:1px solid #999"></div></div>
</body></html>
